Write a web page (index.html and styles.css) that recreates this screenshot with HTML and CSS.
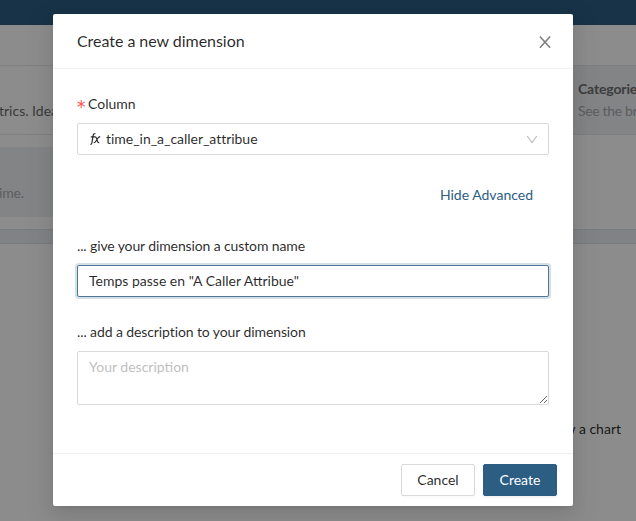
FILE: index.html
```html
<!DOCTYPE html>
<html lang="en">
<head>
<meta charset="utf-8">
<title>Create a new dimension</title>
<link rel="stylesheet" href="styles.css">
</head>
<body>
<div class="page">
  <header class="topbar"></header>
  <div class="toolbar"></div>
  <div class="options">
    <div class="option option-plain"><p>trics. Idea</p></div>
    <div class="option option-muted"><h3>Categorie</h3><p>See the br</p></div>
  </div>
  <div class="options options-second">
    <div class="option option-muted option-time"><p>ime.</p></div>
  </div>
  <div class="divider"></div>
  <main class="canvas"><p>w a chart</p></main>
</div>
<div class="mask">
  <section class="modal" role="dialog" aria-labelledby="title">
    <header class="modal-header">
      <h2 id="title">Create a new dimension</h2>
      <button class="close" aria-label="Close"><svg width="16" height="16" viewBox="0 0 16 16"><path d="M2.9 2.5 13.1 13.8M13.1 2.5 2.9 13.8" fill="none" stroke="currentColor" stroke-width="1.6"/></svg></button>
    </header>
    <form class="modal-body">
      <div class="label"><span class="required">*</span>Column</div>
      <div class="field select">
        <svg class="fx" width="12" height="14" viewBox="0 0 12 14"><path d="M1.5 12.4C2.5 12.5 2.7 11.8 2.9 10.8L4.1 3.8C4.4 2 5 1.5 6.5 1.8M1.8 4.9H6.3M5.7 4.8C6.9 4.5 7.2 5.2 7.7 6.7L8.4 9C8.8 10.4 9.2 10.9 10.2 10.6M11.2 4.7C10 4.5 9.5 5.4 8.3 7L7.2 8.8C6.2 10.4 5.6 10.9 4.7 10.7" fill="none" stroke="currentColor" stroke-width="1.15"/></svg>
        <span class="value">time_in_a_caller_attribue</span>
        <svg class="chevron" width="12" height="12" viewBox="0 0 12 12"><path d="M1.2 3 6 9.6 10.8 3" fill="none" stroke="currentColor" stroke-width="1.1"/></svg>
      </div>
      <div class="advanced"><a>Hide Advanced</a></div>
      <label class="label label-tight" for="name">... give your dimension a custom name</label>
      <input class="field name" id="name" value='Temps passe en "A Caller Attribue"'>
      <label class="label label-tight label-description" for="description">... add a description to your dimension</label>
      <textarea class="field description" id="description" placeholder="Your description"></textarea>
    </form>
    <footer class="modal-footer">
      <button class="btn">Cancel</button>
      <button class="btn primary">Create</button>
    </footer>
  </section>
</div>
</body>
</html>
```

FILE: styles.css
```css
* { box-sizing: border-box; }
body {
  margin: 0;
  height: 521px;
  overflow: hidden;
  font: 14px/22px Lato, "Liberation Sans", sans-serif;
  color: rgba(0, 0, 0, .85);
  background: #fff;
}
h2, h3, p { margin: 0; }
button, input, textarea { font: inherit; color: inherit; }

.page { height: 521px; display: flex; flex-direction: column; }
.topbar { height: 25px; background: #2c5d82; }
.toolbar { height: 41px; border-bottom: 1px solid #e4e6e9; }
.options { height: 69px; display: flex; border-bottom: 1px solid #e4e6e9; }
.option { overflow: hidden; letter-spacing: -.15px; }
.option-plain { flex: 0 0 565px; padding-top: 34px; color: #6b6b6b; letter-spacing: 0; text-indent: -1px; }
.option-muted { flex: 1; padding: 12px 0 0 13px; color: #a8aaac; background: #eff1f5; white-space: nowrap; }
.option-muted h3 { font-size: 14px; line-height: 22px; font-weight: 700; color: #6d6f71; }
.option-muted h3 + p { letter-spacing: -.35px; }
.options-second { height: 70px; margin: 12px 0; border: 0; }
.option-time { flex: 0 0 400px; padding: 35px 0 0; text-indent: -1px; }
.divider { height: 15px; background: #e9edf2; border: 1px solid #dce0e5; border-width: 1px 0; }
.canvas { padding: 174px 15px 0 0; text-align: right; }

.mask {
  position: absolute;
  inset: 0;
  padding: 14px 63px 15px 53px;
  background: rgba(0, 0, 0, .45);
}
.modal {
  height: 492px;
  display: flex;
  flex-direction: column;
  background: #fff;
  border-radius: 2px;
  box-shadow: 0 3px 6px -4px rgba(0, 0, 0, .12), 0 6px 16px rgba(0, 0, 0, .08), 0 9px 28px 8px rgba(0, 0, 0, .05);
}
.modal-header {
  height: 55px;
  padding: 0 20px 0 24px;
  display: flex;
  align-items: center;
  justify-content: space-between;
  border-bottom: 1px solid #f0f0f0;
}
.modal-header h2 { font-size: 16px; line-height: 22px; font-weight: 400; letter-spacing: -.04px; }
.close {
  display: flex;
  padding: 1px 0 0;
  border: 0;
  background: none;
  color: rgba(0, 0, 0, .5);
}
.modal-body { flex: 1; padding: 24px; display: flex; flex-direction: column; }
.label { display: flex; height: 22px; flex: none; }
.label-tight { letter-spacing: -.12px; }
.required {
  width: 7px;
  height: 22px;
  margin-right: 4px;
  padding-top: 3px;
  color: #ff4d4f;
  font: 17px/22px "DejaVu Sans", sans-serif;
}
.field {
  width: 100%;
  height: 32px;
  flex: none;
  padding: 4px 11px;
  border: 1px solid #d9d9d9;
  border-radius: 2px;
  background: #fff;
  outline: none;
}
.select { margin-top: 8px; display: flex; align-items: center; }
.fx { margin-right: 5px; }
.value { flex: 1; letter-spacing: -.03px; }
.chevron { margin-right: -1px; color: rgba(0, 0, 0, .28); }
.advanced { margin: 29px 16px 29px 0; text-align: right; color: #2c5d82; }
.name { margin-top: 8px; padding: 3px 11px 5px; border-color: #4f7799; box-shadow: 0 0 0 2px rgba(44, 93, 130, .2); }
.label-description { margin-top: 24px; letter-spacing: -.1px; }
.description { height: 54px; margin-top: 8px; resize: vertical; }
.description::placeholder { color: #bfbfbf; }
.modal-footer {
  height: 53px;
  padding: 10px 16px;
  display: flex;
  justify-content: flex-end;
  gap: 8px;
  border-top: 1px solid #f0f0f0;
}
.btn {
  width: 74px;
  height: 32px;
  padding: 0;
  border: 1px solid #d9d9d9;
  border-radius: 2px;
  background: #fff;
  box-shadow: 0 2px 0 rgba(0, 0, 0, .016);
}
.primary { color: #fff; background: #2c5d82; border-color: #2c5d82; box-shadow: 0 2px 0 rgba(0, 0, 0, .045); }
```
